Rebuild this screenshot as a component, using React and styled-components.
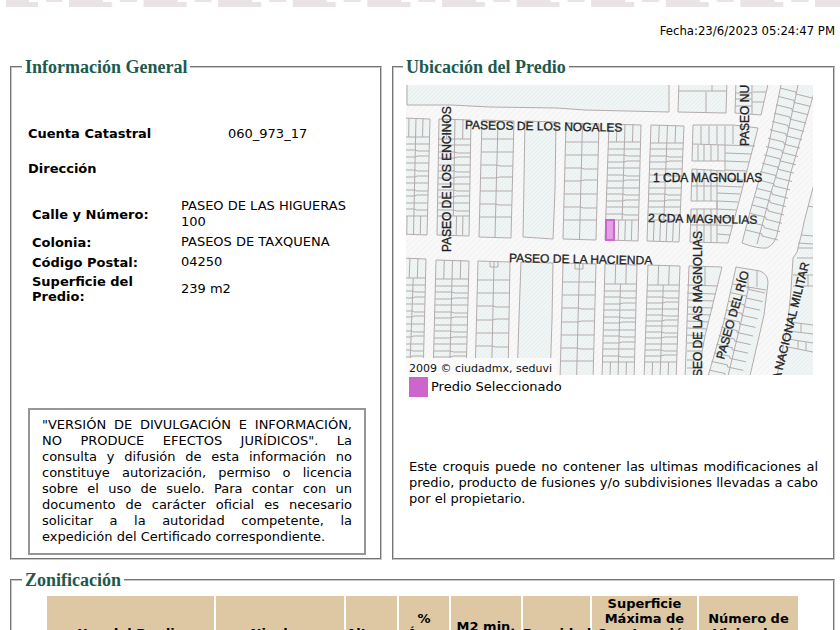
import React from "react";
import styled, { createGlobalStyle } from "styled-components";

const GlobalStyle = createGlobalStyle`
  body {
    margin: 0;
    background: #fff;
    color: #000;
    font: 13px/16px Verdana, "DejaVu Sans", sans-serif;
  }
`;

const TopBand = styled.svg`
  display: block;
  width: 100%;
  height: 8px;
`;

const Page = styled.main`
  padding: 0 5px 16px 10px;
`;

const Stamp = styled.p`
  margin: 0;
  padding: 15px 0 18px;
  text-align: right;
  font-family: Tahoma, "DejaVu Sans Condensed", sans-serif;
`;

const Columns = styled.div`
  display: grid;
  grid-template-columns: 372fr 443fr;
  gap: 10px;
`;

const Panel = styled.fieldset`
  display: flex;
  flex-direction: column;
  min-width: 0;
  margin: 0;
  padding: ${(props) => props.$padding || "0"};
  border: 2px groove #c8c8c8;
`;

const Legend = styled.legend`
  margin-left: ${(props) => props.$indent || "0"};
  padding: 0 3px;
  color: #1d5a4e;
  font: bold 18px/20px "Liberation Serif", "Times New Roman", serif;
`;

const Account = styled.table`
  margin-top: 49px;
  border-collapse: collapse;

  th {
    width: 200px;
    padding: 0;
    text-align: left;
    line-height: 16px;
  }

  td {
    padding: 0;
  }
`;

const Heading = styled.h2`
  margin: 19px 0 17px;
  font-size: 13px;
  line-height: 16px;
`;

const Address = styled.table`
  margin-left: 4px;
  width: 334px;
  max-width: 100%;
  border-spacing: 0 4px;

  th {
    width: 149px;
    padding: 0 30px 0 0;
    box-sizing: border-box;
    text-align: left;
    line-height: 15px;
  }

  td {
    padding: 0;
  }
`;

const Notice = styled.p`
  margin: auto 0 3px;
  padding: 7px 12px 8px;
  border: 2px solid #969696;
  text-align: justify;
`;

const Map = styled.svg`
  display: block;
  width: 407px;
  max-width: 100%;
  height: auto;
`;

const MapLabel = styled.text`
  font: 12px "Liberation Sans", Arial, sans-serif;
  fill: #222;
  stroke: #222;
  stroke-width: 0.3px;
`;

const MapKey = styled.div`
  display: flex;
  align-items: center;
  gap: 3px;
  padding: 2px 0 0 3px;
`;

const Swatch = styled.span`
  width: 19px;
  height: 20px;
  background: #cc66cc;
`;

const Remark = styled.p`
  margin: 62px 15px 0 3px;
  text-align: justify;
`;

const Zoning = styled(Panel)`
  margin-top: 10px;
`;

const ZoningTable = styled.table`
  width: 100%;
  table-layout: fixed;
  border-spacing: 2px;

  th {
    height: 75px;
    padding: 0;
    box-sizing: border-box;
    background: #dec8a4;
    line-height: 15px;
  }
`;

const address = [
  ["Calle y Número:", "PASEO DE LAS HIGUERAS 100"],
  ["Colonia:", "PASEOS DE TAXQUENA"],
  ["Código Postal:", "04250"],
  ["Superficie del Predio:", "239 m2"],
];

const zoningHeads = [
  [167, "Uso del Predio"],
  [128, "Niveles:"],
  [51, "Altura:"],
  [50, "% Área Libre"],
  [70, "M2 min. Vivienda:"],
  [67, "Densidad"],
  [105, "Superficie Máxima de Construcción (Sujeta a restricciones*)"],
  [99, "Número de Viviendas Permitidas"],
];

// outline of each city block, clockwise from the top left corner
const outlines = [
  "407,80 407,105 451,105 490,107 557,108 585,110 669,112 669,80",
  "679,80 678,112 726,113 727,80",
  "736,80 735,113 761,115 769,80",
  "525,121 556,122 555,190 553,239 523,237 524,180",
  "521,262 553,263 552,320 550,380 517,380 519,318",
  "693,125 733,125 758,128 742,190 728,243 690,242 691,209 717,209 717,201 691,201 692,169 725,171 725,161 692,161",
  "689,266 722,267 705,336 702,352 700,380 685,380",
];

// double rows of lots: [topLeft, topRight, bottomLeft, bottomRight, top, bottom, first rung, last rung, count, top cuts, bottom cuts]
const rows = [
  [402, 430, 400, 427, 118, 234, 137, 216, 13, 3, 3],
  [439, 471, 437, 469, 119, 235, 139, 216, 13, 3, 4],
  [482, 514, 479, 511, 120, 237, 139, 217, 7, 1, 1],
  [566, 599, 563, 596, 123, 239, 142, 220, 7, 1, 1],
  [609, 641, 605, 638, 124, 240, 142, 220, 13, 3, 4],
  [651, 684, 647, 679, 125, 241, 143, 220, 13, 3, 4],
  [402, 426, 396, 423, 258, 378, 278, 370, 15, 2, 2],
  [436, 469, 433, 466, 260, 378, 279, 370, 15, 3, 3],
  [478, 510, 475, 508, 261, 378, 280, 359, 7, 1, 1],
  [563, 596, 560, 593, 263, 380, 282, 361, 7, 1, 1],
  [605, 637, 602, 634, 264, 380, 284, 362, 13, 2, 3],
  [648, 680, 644, 676, 265, 380, 285, 362, 14, 2, 3],
];

const LotRow = ({ row }) => {
  const [tl, tr, bl, br, top, bottom, first, last, count, topCuts, bottomCuts] = row;
  const at = (y, part) => {
    const t = (y - top) / (bottom - top);
    const left = tl + (bl - tl) * t;
    const right = tr + (br - tr) * t;
    return left + (right - left) * part;
  };
  const cuts = (n, from, to) =>
    Array.from({ length: n }, (_, i) => {
      const part = (i + 1) / (n + 1);
      return `M${at(from, part)} ${from}L${at(to, part)} ${to}`;
    }).join("");
  const step = (last - first) / (count - 1);
  const rungs = Array.from({ length: count }, (_, i) => {
    const y = Math.round(first + i * step);
    const bend = i === 0 || i === count - 1 ? 0 : i % 3 - 1;
    return `M${at(y, 0)} ${y}L${at(y, 0.5)} ${y}L${at(y, 0.6)} ${y + bend}L${at(y, 1)} ${y + bend}`;
  }).join("");

  return (
    <>
      <path d={`M${tl} ${top}L${tr} ${top + 1}L${br} ${bottom + 1}L${bl} ${bottom}Z`} />
      <path
        fill="none"
        d={cuts(topCuts, top, first) + cuts(1, first, last) + rungs + cuts(bottomCuts, last, bottom)}
      />
    </>
  );
};

// rungs of the two slanted blocks, falling to the right
const slanted = (x, y, endX, endY, width, drop, count) =>
  Array.from({ length: count }, (_, i) => {
    const t = i / (count - 1);
    const px = x + (endX - x) * t;
    const py = y + (endY - y) * t;
    return `M${px} ${py}l${width / 2} ${drop / 2}l0 2l${width / 2} ${drop / 2}`;
  }).join("");

const labels = [
  [465, 129, 1, "PASEOS DE LOS NOGALES"],
  [509, 262, 1, "PASEO DE LA HACIENDA"],
  [653, 182, 0, "1 CDA MAGNOLIAS"],
  [648, 222, 1, "2 CDA MAGNOLIAS"],
  [451, 252, -90, "PASEO DE LOS ENCINOS"],
  [749, 146, -90, "PASEO NU"],
  [702, 377, -90, "SEO DE LAS MAGNOLIAS"],
  [724, 360, -74, "PASEO DEL RÍO"],
  [780, 381, -76, "A NACIONAL MILITAR"],
];

const LocationMap = () => (
  <Map viewBox="406 85 407 290" role="img" aria-label="Croquis de ubicación">
    <defs>
      <pattern id="street" width="6" height="6" patternUnits="userSpaceOnUse">
        <rect width="6" height="6" fill="#f8f8f8" />
        <path d="M0 6L6 0" stroke="#f1f1f1" />
      </pattern>
      <pattern id="lot" width="4" height="4" patternUnits="userSpaceOnUse">
        <rect width="4" height="4" fill="#eff4f4" />
        <path d="M0 4L4 0" stroke="#dff1f0" />
      </pattern>
    </defs>
    <rect x="406" y="85" width="407" height="290" fill="url(#street)" />
    <g fill="url(#lot)" stroke="#b5abab" strokeWidth="1">
      {outlines.map((points) => (
        <polygon key={points} points={points} />
      ))}
      {rows.map((row) => (
        <LotRow key={row.join()} row={row} />
      ))}
      <path d="M782 80L768 148L750 212L742 243Q758 249 767 248Q776 244 778 230L791 172L816 86V80Z" />
      <path d="M736 267L760 271Q768 274 768 283L764 315L749 380H707L724 321Z" />
      <path d="M816 176L804 222L802 232L797 252L793 258L791 290L787 330L776 380H816Z" />
    </g>
    <g fill="none" stroke="#b5abab" strokeWidth="1">
      <path d="M679 91H727M706 92V113M712 85V91M752 85V114M735 93H752M735 99H752M735 106H752M753 92H766M752 102H764" />
      <path d="M490 261V267H498V261M575 263V269H583V263" />
      <path d="M693 144L755 146M701 126V144M709 126V144M717 126V144M725 126V144M733 126V144M742 126V144M698 145V161M704 145V161M711 145V161M718 145V161M725 144V161" />
      <path d="M725 153L751 154M725 161L749 162M725 170L747 171M717 178L744 180M717 186L742 187M717 193L740 194M717 201L738 202M717 209L736 210M717 217L734 218M717 225L732 226M717 234L730 235M717 171V242" />
      <path d="M692 186H717M697 169V201M704 169V201M711 169V201M697 209V242M704 209V242M711 209V242M691 225H717" />
      <path d="M705 266V285M687 285L718 286M687 293L716 294M687 300L714 301M687 307L713 308M687 314L711 315M687 321L709 322M687 328L707 329M687 335L705 336M687 343H704M687 351H702M687 360H701M687 368H700" />
      <path d="M798 85L796 95L785 145L770 196L757 244M748 272L748 290L741 322L728 376M757 271V287" />
      <path d={slanted(780, 88, 746, 230, 32, 8, 18)} />
      <path d={slanted(733, 284, 709, 370, 32, 7, 11)} />
      <path d="M748 287L766 290M801 235L813 236M798 243L813 244M798 248H813M797 258H813M793 275H813M793 286H813M808 275V286M790 322L813 325M789 331L813 334M801 324V332M788 339L813 343M788 347L813 352M798 341V349M806 342V351M808 206L813 207" />
    </g>
    <rect x="606" y="220" width="8" height="20" fill="#e5a0e5" stroke="#cc66cc" strokeWidth="2" />
    {labels.map(([x, y, angle, text]) => (
      <MapLabel key={text} transform={`translate(${x} ${y}) rotate(${angle})`}>
        {text}
      </MapLabel>
    ))}
    <rect x="406" y="358" width="151" height="17" fill="#fafafa" />
    <text x="409" y="372" fontSize="11" fill="#111">
      2009 © ciudadmx, seduvi
    </text>
  </Map>
);

const App = () => {
  return (
    <>
      <GlobalStyle />
      <TopBand aria-hidden="true">
        <defs>
          <pattern id="fret" x="69" width="74.6" height="8" patternUnits="userSpaceOnUse">
            <path d="M0 0H34V2H43V7H0ZM51 0H68V2H51Z" fill="#e9e3e6" />
          </pattern>
        </defs>
        <path d="M6 0H29V2H38V7H6ZM46 0H62V2H46Z" fill="#e9e3e6" />
        <rect x="69" width="100%" height="8" fill="url(#fret)" />
      </TopBand>
      <Page>
        <Stamp>Fecha:23/6/2023 05:24:47 PM</Stamp>
        <Columns>
          <Panel $padding="0 14px 0 16px">
            <Legend $indent="-6px">Información General</Legend>
            <Account>
              <tbody>
                <tr>
                  <th scope="row">Cuenta Catastral</th>
                  <td>060_973_17</td>
                </tr>
              </tbody>
            </Account>
            <Heading>Dirección</Heading>
            <Address>
              <tbody>
                {address.map(([name, value]) => (
                  <tr key={name}>
                    <th scope="row">{name}</th>
                    <td>{value}</td>
                  </tr>
                ))}
              </tbody>
            </Address>
            <Notice>
              "VERSIÓN DE DIVULGACIÓN E INFORMACIÓN, NO PRODUCE EFECTOS JURÍDICOS". La consulta y
              difusión de esta información no constituye autorización, permiso o licencia sobre el
              uso de suelo. Para contar con un documento de carácter oficial es necesario solicitar
              a la autoridad competente, la expedición del Certificado correspondiente.
            </Notice>
          </Panel>
          <Panel $padding="8px 0 51px 12px">
            <Legend $indent="-3px">Ubicación del Predio</Legend>
            <LocationMap />
            <MapKey>
              <Swatch />
              Predio Seleccionado
            </MapKey>
            <Remark>
              Este croquis puede no contener las ultimas modificaciones al predio, producto de
              fusiones y/o subdivisiones llevadas a cabo por el propietario.
            </Remark>
          </Panel>
        </Columns>
        <Zoning $padding="4px 33px 16px">
          <Legend $indent="-23px">Zonificación</Legend>
          <ZoningTable>
            <colgroup>
              {zoningHeads.map(([width, name]) => (
                <col key={name} style={{ width: `${(width / 737) * 100}%` }} />
              ))}
            </colgroup>
            <thead>
              <tr>
                {zoningHeads.map(([, name]) => (
                  <th key={name} scope="col">
                    {name}
                  </th>
                ))}
              </tr>
            </thead>
          </ZoningTable>
        </Zoning>
      </Page>
    </>
  );
};

export default App;
